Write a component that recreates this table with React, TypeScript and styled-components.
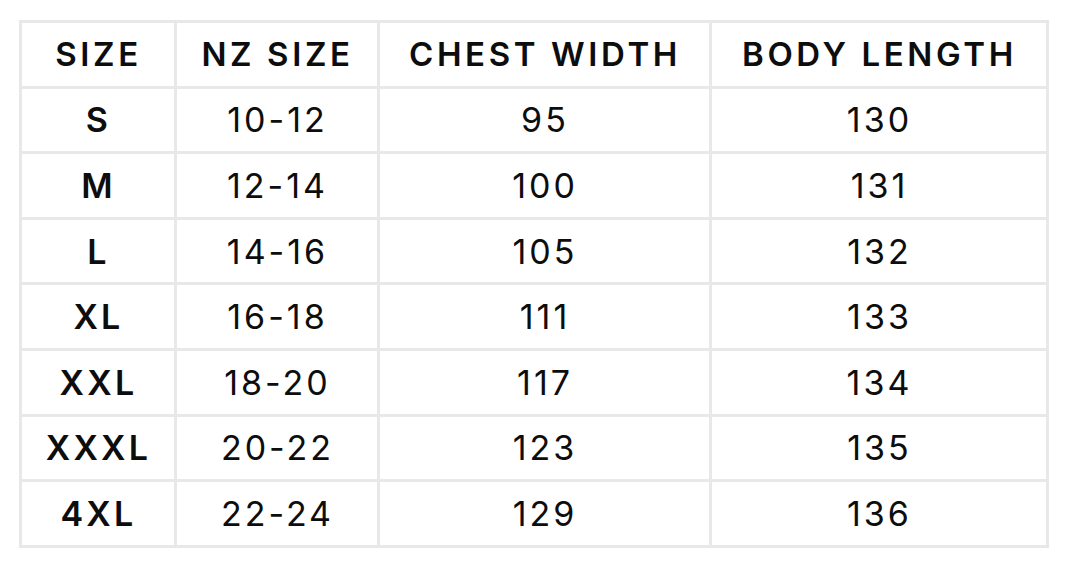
import React from 'react';
import styled, { createGlobalStyle } from 'styled-components';

const GlobalStyle = createGlobalStyle`
  body {
    margin: 0;
    background: #ffffff;
    font-family: Inter, "Liberation Sans", sans-serif;
    color: #111111;
  }
`;

const Page = styled.div`
  padding: 20px 0 0 19px;
`;

const Table = styled.table`
  width: 1027px;
  border-collapse: collapse;
  table-layout: fixed;
  border: 3px solid #e8e8ea;
`;

const Col = styled.col<{ w: number }>`
  width: ${({ w }) => w}px;
`;

const HeadCell = styled.th`
  height: 62.6px;
  padding: 0 0 0 1px;
  border: 3px solid #e8e8ea;
  font-size: 33px;
  font-weight: 600;
  letter-spacing: 3.6px;
  text-align: center;
  color: #0d0d0d;
`;

const Cell = styled.td<{ bold?: boolean }>`
  height: 62.6px;
  padding: 0 0 0 1px;
  border: 3px solid #e8e8ea;
  font-size: 34px;
  font-weight: ${({ bold }) => (bold ? 600 : 400)};
  letter-spacing: ${({ bold }) => (bold ? '3.2px' : '3px')};
  text-align: center;
  color: #0d0d0d;
`;

const rows = [
  ['S', '10-12', '95', '130'],
  ['M', '12-14', '100', '131'],
  ['L', '14-16', '105', '132'],
  ['XL', '16-18', '111', '133'],
  ['XXL', '18-20', '117', '134'],
  ['XXXL', '20-22', '123', '135'],
  ['4XL', '22-24', '129', '136'],
];

export default function App() {
  return (
    <>
      <GlobalStyle />
      <Page>
        <Table>
          <colgroup>
            <Col w={155} />
            <Col w={203} />
            <Col w={332} />
            <Col w={337} />
          </colgroup>
          <thead>
            <tr>
              <HeadCell>SIZE</HeadCell>
              <HeadCell>NZ SIZE</HeadCell>
              <HeadCell>CHEST WIDTH</HeadCell>
              <HeadCell>BODY LENGTH</HeadCell>
            </tr>
          </thead>
          <tbody>
            {rows.map((r) => (
              <tr key={r[0]}>
                <Cell bold>{r[0]}</Cell>
                <Cell>{r[1]}</Cell>
                <Cell>{r[2]}</Cell>
                <Cell>{r[3]}</Cell>
              </tr>
            ))}
          </tbody>
        </Table>
      </Page>
    </>
  );
}
